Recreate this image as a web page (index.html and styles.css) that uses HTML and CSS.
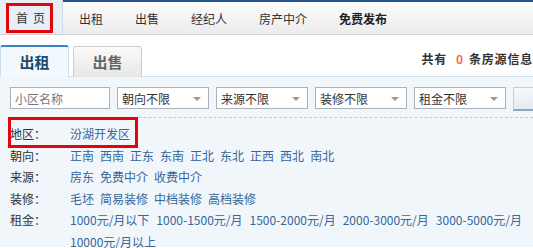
FILE: index.html
```html
<!DOCTYPE html>
<html lang="zh-CN">
<head>
<meta charset="utf-8">
<title>出租房源</title>
<link rel="stylesheet" href="styles.css">
</head>
<body>
<div class="page">
  <nav class="topnav">
    <a class="nav-home"><span class="mark">首<i class="sp"></i>页</span></a>
    <a class="nav-item">出租</a>
    <a class="nav-item">出售</a>
    <a class="nav-item">经纪人</a>
    <a class="nav-item">房产中介</a>
    <a class="nav-item strong">免费发布</a>
  </nav>

  <div class="tabs">
    <div class="tab active">出租</div>
    <div class="tab">出售</div>
    <div class="count">共有<em>0</em>条房源信息</div>
  </div>

  <div class="filter">
    <div class="search-row">
      <input class="text-input" type="text" placeholder="小区名称">
      <div class="select"><span>朝向不限</span><b class="arrow"></b></div>
      <div class="select"><span>来源不限</span><b class="arrow"></b></div>
      <div class="select"><span>装修不限</span><b class="arrow"></b></div>
      <div class="select"><span>租金不限</span><b class="arrow"></b></div>
      <div class="search-btn"></div>
    </div>

    <div class="rows">
      <div class="annot"></div>
      <div class="row">
        <span class="label">地区：</span>
        <div class="values"><a>汾湖开发区</a></div>
      </div>
      <div class="row">
        <span class="label">朝向：</span>
        <div class="values"><a>正南</a><a>西南</a><a>正东</a><a>东南</a><a>正北</a><a>东北</a><a>正西</a><a>西北</a><a>南北</a></div>
      </div>
      <div class="row">
        <span class="label">来源：</span>
        <div class="values"><a>房东</a><a>免费中介</a><a>收费中介</a></div>
      </div>
      <div class="row">
        <span class="label">装修：</span>
        <div class="values"><a>毛坯</a><a>简易装修</a><a>中档装修</a><a>高档装修</a></div>
      </div>
      <div class="row">
        <span class="label">租金：</span>
        <div class="values rent"><a>1000元/月以下</a><a>1000-1500元/月</a><a>1500-2000元/月</a><a>2000-3000元/月</a><a>3000-5000元/月</a><a>10000元/月以上</a></div>
      </div>
    </div>
  </div>
</div>
</body>
</html>
```

FILE: styles.css
```css
* { box-sizing: border-box; }

html, body {
  margin: 0;
  padding: 0;
  background: #ffffff;
  overflow: hidden;
}

body {
  font-family: "Noto Sans CJK SC", "Liberation Sans", sans-serif;
  font-size: 12px;
  color: #333333;
}

.page {
  width: 533px;
  height: 248px;
  overflow: hidden;
}

a { text-decoration: none; cursor: pointer; }

/* ---------- top navigation ---------- */
.topnav {
  display: flex;
  height: 35px;
  border-top: 2px solid #23548f;
  border-bottom: 1px solid #d3d3d3;
  background: linear-gradient(#fbfbfb, #ececec);
}

.nav-home {
  display: flex;
  align-items: center;
  width: 63px;
  height: 34px;
  margin-top: -2px;
  padding: 1px 0 0 6px;
  background: #e6eef7;
  border-right: 1px solid #d4dce5;
}

.mark {
  display: block;
  height: 30px;
  line-height: 24px;
  padding: 0 5px 0 7px;
  border: 3px solid #e2050c;
  color: #333333;
  font-size: 12px;
}

.mark .sp {
  display: inline-block;
  width: 5px;
}

.nav-item {
  display: flex;
  align-items: center;
  padding: 0 16px;
  color: #333333;
}

.nav-item:first-of-type { padding-left: 17px; }

.nav-item.strong {
  font-weight: bold;
  color: #222222;
}

/* ---------- tabs ---------- */
.tabs {
  display: flex;
  align-items: flex-end;
  height: 42px;
  padding-top: 10px;
  margin-bottom: -1px;
  position: relative;
}

.tab {
  width: 69px;
  height: 31px;
  line-height: 29px;
  text-align: center;
  font-size: 15px;
  font-weight: bold;
  color: #666666;
  border: 1px solid #cdcdcd;
  border-bottom: none;
  border-radius: 3px 3px 0 0;
  background: linear-gradient(#fafafa, #e7e7e7);
  margin-left: 4px;
}

.tab.active {
  margin-left: 0;
  width: 69px;
  height: 32px;
  line-height: 30px;
  color: #1b4a6b;
  border-top: 2px solid #3b86c1;
  border-left: 1px solid #cbdcea;
  border-right: 1px solid #cbdcea;
  background: #f3f8fc;
  position: relative;
  z-index: 1;
}

.count {
  margin-left: auto;
  align-self: center;
  line-height: 16px;
  margin-bottom: 5px;
  font-weight: bold;
  color: #333333;
  letter-spacing: 0.8px;
  white-space: nowrap;
}

.count em {
  font-style: normal;
  color: #e8704f;
  margin: 0 5px 0 9px;
}

/* ---------- filter panel ---------- */
.filter {
  background: #f1f6fb;
  border-top: 1px solid #d3e1ed;
  padding-top: 10px;
  height: 171px;
}

.search-row {
  display: flex;
  gap: 7px;
  padding-left: 10px;
  overflow: hidden;
}

.text-input {
  flex: none;
  width: 100px;
  height: 22px;
  margin: 0;
  padding: 0 4px;
  border: 1px solid #a9b1b9;
  background: #ffffff;
  font-family: inherit;
  font-size: 12px;
  color: #333333;
  outline: none;
}

.text-input::placeholder { color: #777777; }

.select {
  flex: none;
  display: flex;
  align-items: center;
  justify-content: space-between;
  width: 92px;
  height: 22px;
  padding: 0 7px 0 4px;
  border: 1px solid #a9b1b9;
  background: #ffffff;
  color: #333333;
}

.arrow {
  width: 0;
  height: 0;
  border-left: 4px solid transparent;
  border-right: 4px solid transparent;
  border-top: 4px solid #9a9a9a;
  margin-top: 2px;
}

.search-btn {
  flex: none;
  width: 47px;
  height: 24px;
  border: 1px solid #c2cfdb;
  border-bottom: 2px solid #8aa6c0;
  background: linear-gradient(#f5f8fb, #e4ebf2);
}

.rows {
  position: relative;
  margin: 6px 0 0 8px;
  padding-top: 5px;
  border-top: 1px dashed #c3cbd3;
}

.annot {
  position: absolute;
  left: 0;
  top: -1px;
  width: 130px;
  height: 31px;
  border: 3px solid #e2050c;
  pointer-events: none;
}

.row {
  display: flex;
  line-height: 21.6px;
}

.label {
  width: 62px;
  flex: none;
  padding-left: 2px;
  color: #333333;
}

.values {
  display: flex;
  flex-wrap: wrap;
  column-gap: 6px;
  width: 463px;
}

.values.rent { column-gap: 7px; }

.values a {
  color: #35679b;
  white-space: nowrap;
}
```
